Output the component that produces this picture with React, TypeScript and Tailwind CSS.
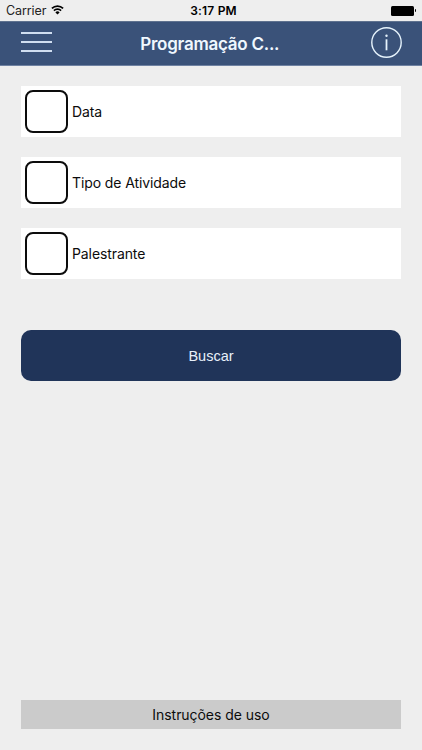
import React from "react";

interface FilterRowProps {
  label: string;
}

const filters = ["Data", "Tipo de Atividade", "Palestrante"];

const StatusBar: React.FC = () => (
  <div className="relative flex h-[21px] items-center justify-between pl-[6px] pr-[6px] text-black">
    <div className="flex items-center gap-[5px]">
      <span className="text-[12.5px] leading-[21px] tracking-[-0.1px] text-[#222]">
        Carrier
      </span>
      <svg className="mb-px" width="13" height="10" viewBox="0 0 13 10" fill="none">
        <path d="M0.9 3.4a8 8 0 0 1 11.2 0" stroke="#000" strokeWidth="1.7" />
        <path d="M2.9 5.6a5.1 5.1 0 0 1 7.2 0" stroke="#000" strokeWidth="1.6" />
        <path d="M6.5 9.6L4.4 7.4a3 3 0 0 1 4.2 0z" fill="#000" />
      </svg>
    </div>
    <span className="absolute inset-x-0 pl-[5px] text-center text-[12px] font-semibold leading-[21px] tracking-[0.2px]">
      3:17 PM
    </span>
    <div className="flex items-center gap-[0.5px]">
      <div className="h-[10px] w-[23px] rounded-[1.5px] bg-black" />
      <div className="h-[3px] w-[1.5px] rounded-r-full bg-black" />
    </div>
  </div>
);

const Header: React.FC = () => (
  <header className="flex h-[45px] items-center justify-between border-y border-t-[#5f728f] border-b-[#6f82a2] bg-[#3a5279] pl-[21px] pr-[20.5px]">
    <button aria-label="Menu" className="flex w-[31px] flex-col gap-[7.5px] pb-[3px]">
      <span className="h-[1.5px] bg-[#d0def0]" />
      <span className="h-[1.5px] bg-[#d0def0]" />
      <span className="h-[1.5px] bg-[#d0def0]" />
    </button>
    <h1 className="pr-[3px] text-[17px] font-semibold leading-[22px] tracking-[-0.25px] text-[#f0f8ff]">
      Programação C...
    </h1>
    <button aria-label="Info" className="pb-[2px]">
      <svg width="31" height="31" viewBox="0 0 31 31" fill="none">
        <circle cx="15.5" cy="15.5" r="14.7" stroke="#e6f3fc" strokeWidth="1.4" />
        <circle cx="15.5" cy="8.8" r="1.2" fill="#e6f3fc" />
        <path d="M15.5 12.3v11" stroke="#e6f3fc" strokeWidth="1.8" />
      </svg>
    </button>
  </header>
);

const FilterRow: React.FC<FilterRowProps> = ({ label }) => (
  <label className="flex h-[51px] items-center gap-1 bg-white pl-1">
    <span className="h-[43px] w-[43px] rounded-[8px] border-2 border-[#0c0c0c] bg-white" />
    <span className="text-[14px] tracking-[-0.1px] text-[#0c0c0c]">{label}</span>
  </label>
);

export default function App() {
  return (
    <div className="flex h-screen w-full flex-col bg-[#eeeeee] font-['Inter',sans-serif]">
      <StatusBar />
      <Header />
      <main className="flex flex-1 flex-col px-[21px] pt-5 pb-[21px]">
        <div className="flex flex-col gap-5">
          {filters.map((label) => (
            <FilterRow key={label} label={label} />
          ))}
        </div>
        <button className="mt-[51px] h-[51px] rounded-[10px] bg-[#203459] pt-[2px] font-['Liberation_Sans',Arial,sans-serif] text-[14.5px] text-[#e8f0fa]">
          Buscar
        </button>
        <button className="mt-auto h-[29px] bg-[#cbcbcb] text-[14px] tracking-[-0.05px] text-[#0c0c0c]">
          Instruções de uso
        </button>
      </main>
    </div>
  );
}
